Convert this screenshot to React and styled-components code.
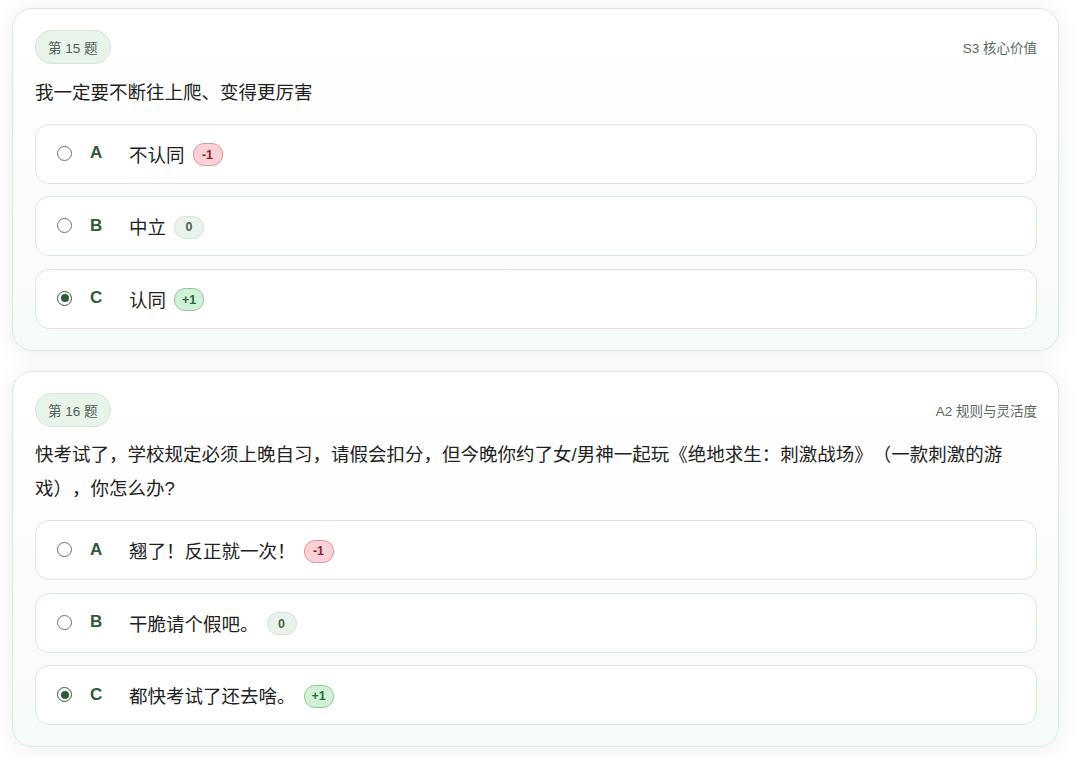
import React from "react";
import styled, { createGlobalStyle } from "styled-components";

const GlobalStyle = createGlobalStyle`
  html, body {
    margin: 0;
    padding: 0;
    background: #fff;
  }
  body {
    font-family: "Liberation Sans", "Noto Sans CJK SC", sans-serif;
    color: #222;
    text-spacing-trim: space-all;
  }
`;

const Page = styled.div`
  display: flex;
  flex-direction: column;
  gap: 20px;
  padding: 8px 21px 20px 12px;
`;

const Card = styled.section`
  border: 1px solid #d9eadc;
  border-radius: 20px;
  background: linear-gradient(180deg, #ffffff 0%, #f7fbf7 100%);
  box-shadow: 0 2px 24px rgba(0, 0, 0, 0.07);
  padding: 21px 21px 21px 22px;
`;

const Header = styled.div`
  display: flex;
  align-items: center;
  justify-content: space-between;
`;

const Number = styled.span`
  display: inline-flex;
  align-items: center;
  height: 32px;
  padding: 0 12px;
  border-radius: 17px;
  background: #e8f3ea;
  border: 1px solid #d2e7d5;
  font-size: 13.5px;
  color: #4e5e53;
`;

const Dimension = styled.span`
  font-size: 13.5px;
  color: #5b6a60;
`;

const Question = styled.p`
  margin: 11.5px 0 14px;
  font-size: 18.5px;
  line-height: 34px;
  color: #222;
`;

const Options = styled.div`
  display: flex;
  flex-direction: column;
  gap: 12.5px;
`;

const Option = styled.label`
  display: flex;
  align-items: center;
  height: 60px;
  box-sizing: border-box;
  padding: 0 21px;
  border: 1px solid #d8e9db;
  border-radius: 14px;
  background: #fff;
  cursor: pointer;
`;

const Radio = styled.span`
  width: 15px;
  height: 15px;
  box-sizing: border-box;
  border-radius: 50%;
  border: ${(p) => (p.$checked ? "1.5px solid #2f5a3a" : "1px solid #6f6f6f")};
  background: #fff;
  display: flex;
  align-items: center;
  justify-content: center;
  margin-right: 18px;
  margin-top: -1px;

  &::after {
    content: "";
    display: ${(p) => (p.$checked ? "block" : "none")};
    width: 8px;
    height: 8px;
    border-radius: 50%;
    background: #2f5a3a;
  }
`;

const Letter = styled.span`
  width: 39px;
  font-size: 17px;
  font-weight: 700;
  color: #2f5a3a;
  margin-top: -1px;
`;

const Text = styled.span`
  font-size: 18.5px;
  color: #222;
`;

const tones = {
  neg: { bg: "#f8d2d6", border: "#e3939b", color: "#8c1f2b" },
  zero: { bg: "#e9f3eb", border: "#d2e7d5", color: "#4b5f50" },
  pos: { bg: "#d2efd7", border: "#8fcb9a", color: "#2b6a39" },
};

const Score = styled.span`
  display: inline-flex;
  align-items: center;
  justify-content: center;
  height: 21px;
  min-width: 14px;
  padding: 0 7px;
  margin-left: 8px;
  margin-top: 2px;
  border-radius: 11px;
  font-size: 12.5px;
  font-weight: 700;
  background: ${(p) => tones[p.$tone].bg};
  border: 1px solid ${(p) => tones[p.$tone].border};
  color: ${(p) => tones[p.$tone].color};
`;

const questions = [
  {
    no: 15,
    dim: "S3 核心价值",
    text: "我一定要不断往上爬、变得更厉害",
    options: [
      { key: "A", text: "不认同", score: "-1", tone: "neg" },
      { key: "B", text: "中立", score: "0", tone: "zero" },
      { key: "C", text: "认同", score: "+1", tone: "pos", checked: true },
    ],
  },
  {
    no: 16,
    dim: "A2 规则与灵活度",
    text: "快考试了，学校规定必须上晚自习，请假会扣分，但今晚你约了女/男神一起玩《绝地求生：刺激战场》（一款刺激的游戏），你怎么办?",
    options: [
      { key: "A", text: "翘了！反正就一次！", score: "-1", tone: "neg" },
      { key: "B", text: "干脆请个假吧。", score: "0", tone: "zero" },
      { key: "C", text: "都快考试了还去啥。", score: "+1", tone: "pos", checked: true },
    ],
  },
];

export default function App() {
  return (
    <>
      <GlobalStyle />
      <Page>
        {questions.map((q) => (
          <Card key={q.no}>
            <Header>
              <Number>第 {q.no} 题</Number>
              <Dimension>{q.dim}</Dimension>
            </Header>
            <Question>{q.text}</Question>
            <Options>
              {q.options.map((o) => (
                <Option key={o.key}>
                  <Radio $checked={o.checked} />
                  <Letter>{o.key}</Letter>
                  <Text>{o.text}</Text>
                  <Score $tone={o.tone}>{o.score}</Score>
                </Option>
              ))}
            </Options>
          </Card>
        ))}
      </Page>
    </>
  );
}
